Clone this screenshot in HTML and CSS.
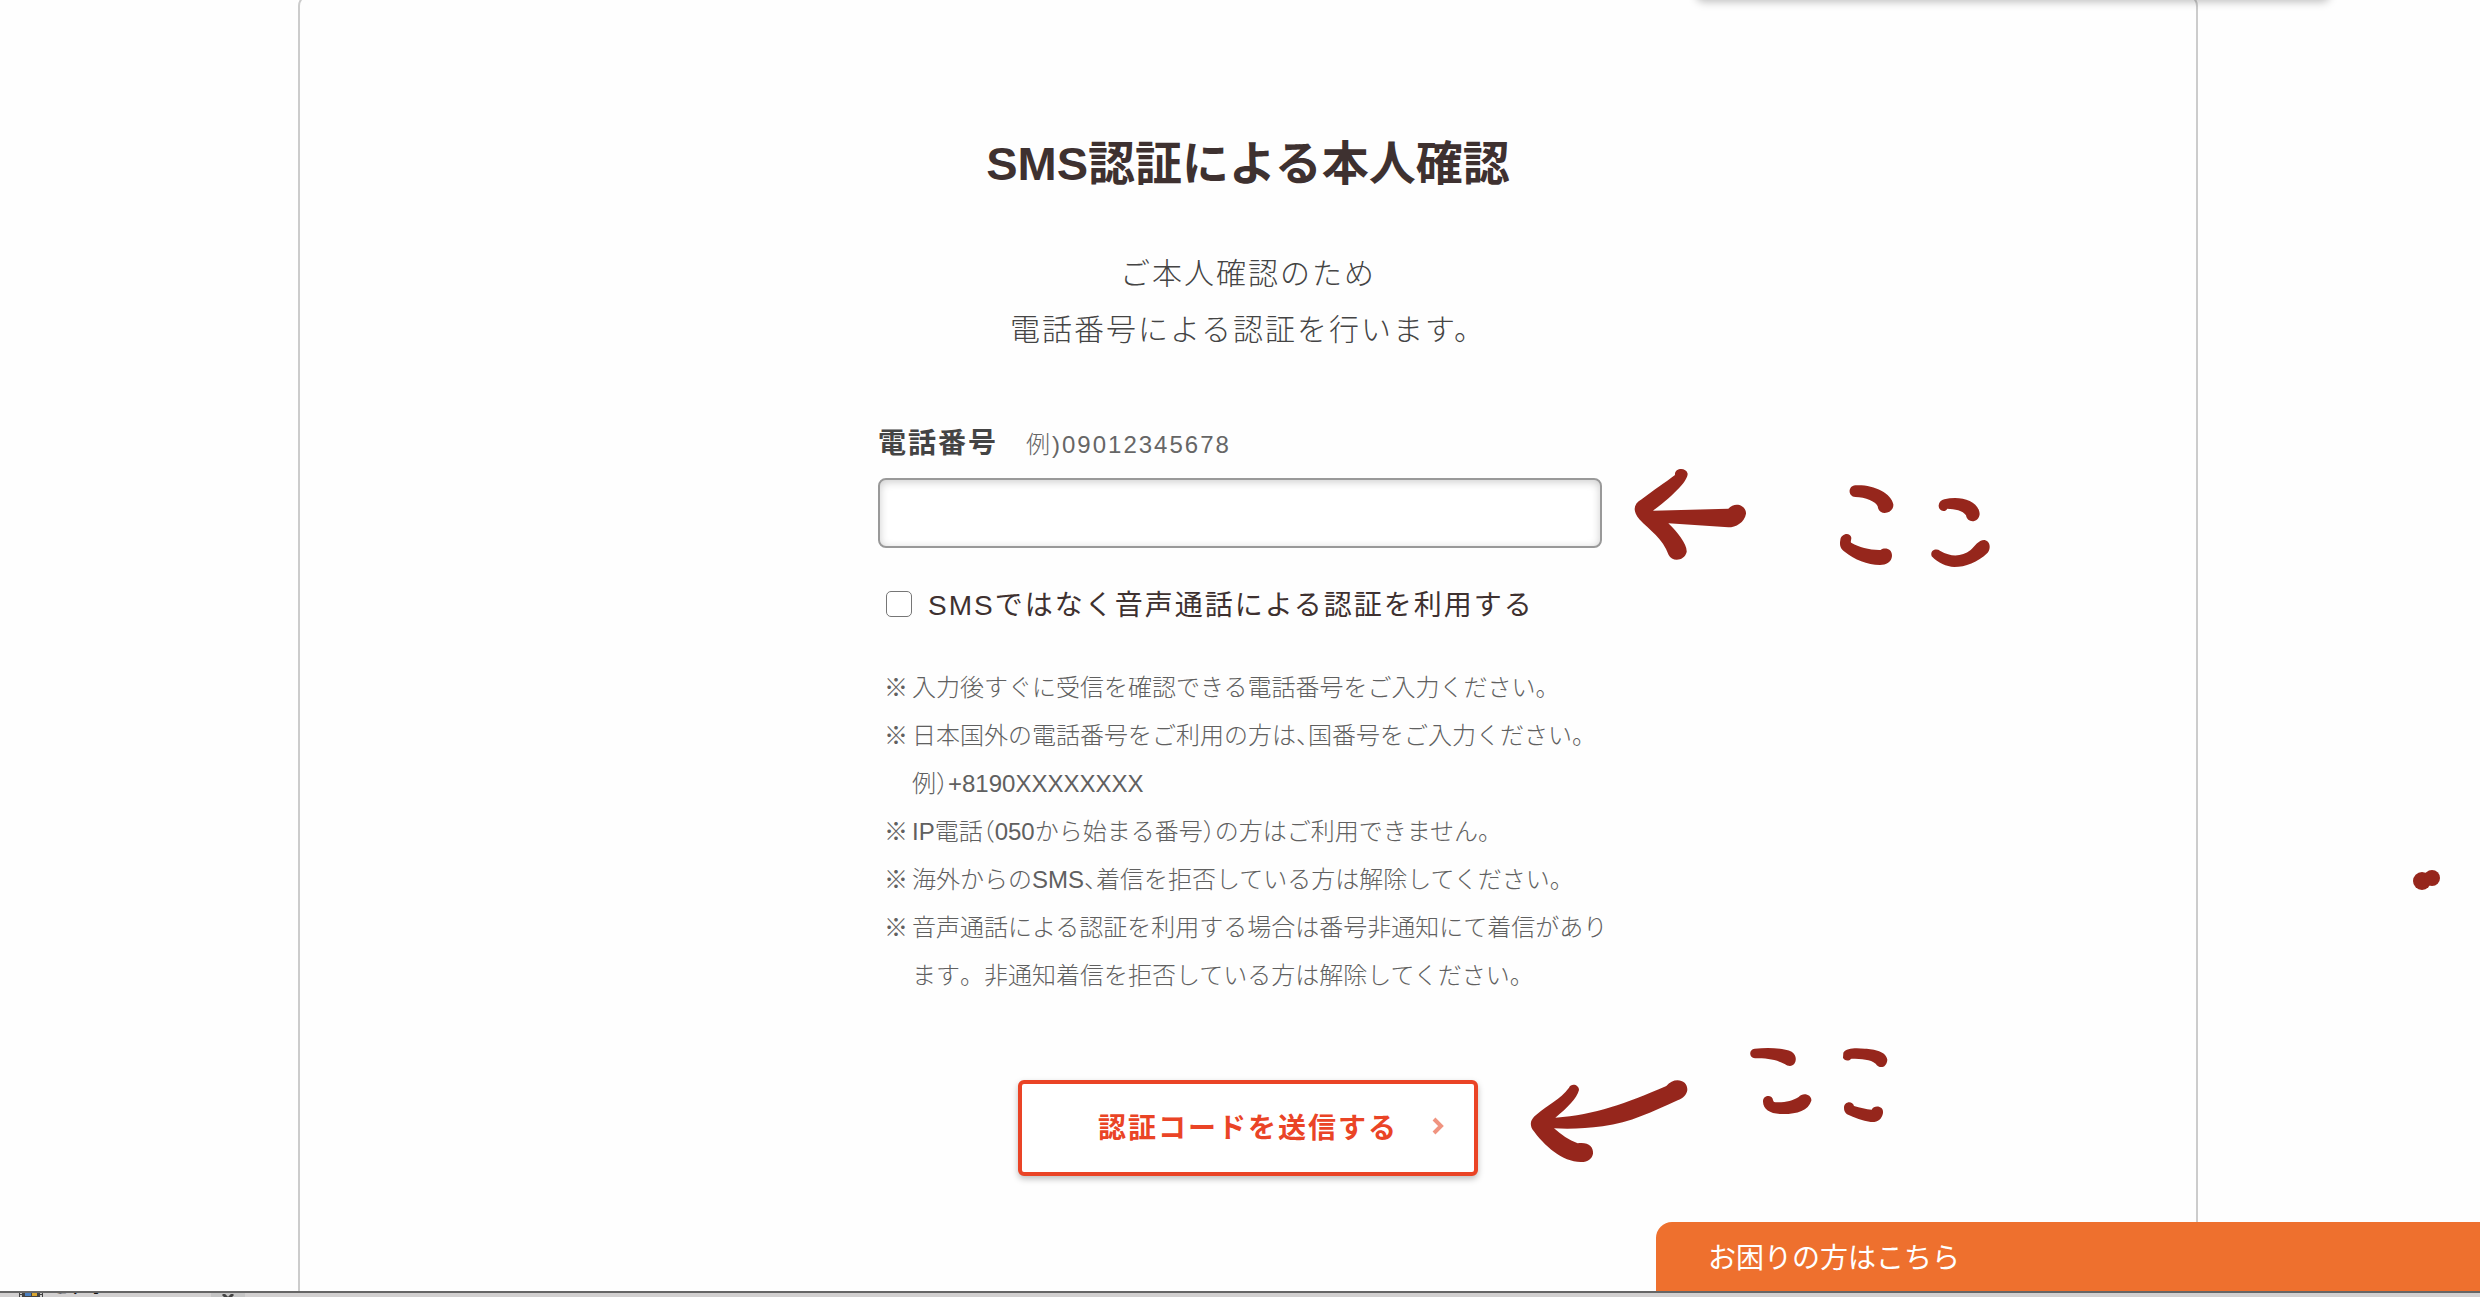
FILE: index.html
```html
<!DOCTYPE html>
<html lang="ja">
    <head>
        <meta charset="utf-8">
        <title>SMS認証による本人確認</title>
        <link rel="stylesheet" href="styles.css">
    </head>
    <body>
        <div class="page">
            <div class="popup-edge"></div>
            <main class="card">
                <h1 class="title">SMS認証による本人確認</h1>
                <p class="lead">ご本人確認のため<br>電話番号による認証を行います。</p>

                <form class="form">
                    <div class="field-head">
                        <label class="field-label" for="tel">電話番号</label>
                        <span class="field-hint" id="tel-hint">例)09012345678</span>
                    </div>
                    <div class="field">
                        <input class="field-input" id="tel" type="tel" aria-describedby="tel-hint">
                        <svg class="mark mark-field" viewBox="90 75 1110 330" role="img" aria-label="ここ">
                            <path d="M225 105C222 84 258 80 263 101C263 121 228 160 159 212L385 206C405 183 439 196 438 221C434 247 407 262 385 262L205 250C232 276 262 313 260 336C253 364 216 366 206 345C187 294 151 273 118 238C96 211 101 192 125 178C160 150 196 128 225 105Z"/>
                            <path d="M766 136C820 133 873 158 880 193C882 222 836 230 833 199C830 186 795 171 766 171C743 170 743 138 766 136Z"/>
                            <path d="M721 300C722 281 750 274 754 293C754 301 750 307 755 309C777 321 810 331 842 330C854 321 877 326 876 348C875 366 858 375 840 375C801 374 764 359 735 336C721 327 718 315 721 300Z"/>
                            <path d="M1033 178C1078 166 1136 180 1139 222C1136 251 1101 250 1098 226C1089 211 1064 207 1042 206C1035 220 1015 212 1016 196C1017 186 1024 180 1033 178Z"/>
                            <path d="M995 349C989 332 1007 323 1021 333C1055 353 1087 349 1111 331C1125 318 1136 299 1154 300C1170 303 1174 325 1163 338C1133 367 1096 381 1063 381C1039 380 1015 370 995 349Z"/>
                        </svg>
                    </div>

                    <div class="check">
                        <input class="check-box" id="voice" type="checkbox">
                        <label for="voice">SMSではなく音声通話による認証を利用する</label>
                    </div>

                    <ul class="notes">
                        <li>入力後すぐに受信を確認できる電話番号をご入力ください。</li>
                        <li>日本国外の電話番号をご利用の方は、国番号をご入力ください。<br>例）+8190XXXXXXXX</li>
                        <li>IP電話（050から始まる番号）の方はご利用できません。</li>
                        <li>海外からのSMS、着信を拒否している方は解除してください。</li>
                        <li>音声通話による認証を利用する場合は番号非通知にて着信があります<span class="full">。</span>非通知着信を拒否している方は解除してください。</li>
                    </ul>

                    <div class="submit">
                        <button class="submit-button" type="button">
                            <span>認証コードを送信する</span>
                            <svg class="submit-arrow" viewBox="0 0 12 18"><path d="M2 2L9 9L2 16"/></svg>
                        </button>
                        <svg class="mark mark-submit" viewBox="75 75 1110 375" role="img" aria-label="ここ">
                            <path d="M207 206C214 191 237 197 237 213C230 238 204 265 166 296C287 287 376 254 499 201C521 172 564 181 562 213C559 229 550 237 533 244C458 278 392 311 308 322C258 328 213 331 162 328C183 347 207 363 233 373C264 368 281 383 279 404C276 419 264 429 244 429C188 430 133 381 97 331C88 312 93 300 109 287C143 257 180 242 207 206Z"/>
                            <path d="M764 89C807 85 851 87 875 98C887 106 891 121 884 133C876 144 864 142 854 135C827 121 800 118 765 118C746 116 746 91 764 89Z"/>
                            <path d="M789 248C788 228 817 225 819 243C820 250 824 250 831 250C859 250 878 245 896 234C910 218 936 228 934 245C925 275 889 286 845 285C811 284 790 272 789 248Z"/>
                            <path d="M1030 101C1039 86 1069 86 1095 89C1122 90 1159 97 1162 122C1160 148 1137 150 1127 134C1111 119 1086 121 1054 119C1045 128 1033 125 1029 116Z"/>
                            <path d="M1032 267C1031 248 1057 243 1062 261C1080 266 1098 271 1115 272C1122 257 1152 260 1149 282C1146 301 1132 311 1112 309C1087 306 1064 297 1041 286C1035 281 1032 275 1032 267Z"/>
                        </svg>
                    </div>
                </form>
            </main>
            <svg class="mark mark-dot" viewBox="0 0 34 24"><circle cx="12" cy="14" r="9"/><circle cx="22" cy="11" r="8"/></svg>
            <a class="help" href="#help">お困りの方はこちら</a>
        </div>

        <footer class="strip">
            <svg class="strip-film" viewBox="0 0 24 6">
                <path fill="#444" d="M0 0h24v6H0z"/>
                <path fill="#ccc" d="M1 1h2v2H1zM1 4h2v2H1zM21 1h2v2h-2zM21 4h2v2h-2z"/>
                <path fill="#4a7fc0" d="M6 1h6v4H6z"/>
                <path fill="#d8a530" d="M13 2h5v3h-5z"/>
            </svg>
            <span class="strip-label">ビデオ</span>
            <span class="strip-toggle"><svg viewBox="0 0 12 6"><path d="M1 0L6 5L11 0"/></svg></span>
        </footer>
    </body>
</html>
```

FILE: styles.css
```css
* {
    box-sizing: border-box; }
body {
    margin: 0;
    height: 100vh;
    display: flex;
    flex-direction: column;
    overflow: hidden;
    background: #fefefe;
    color: #3e3130;
    font-family: "Liberation Sans", "Noto Sans CJK JP", sans-serif;
    font-size: 28px; }
.page {
    position: relative;
    flex: 1;
    min-height: 0;
    overflow: hidden; }

/* bottom shadow of the panel scrolled off above */
.popup-edge {
    position: absolute;
    top: -20px;
    right: 150px;
    width: 634px;
    height: 20px;
    border-radius: 8px;
    box-shadow: 0 2px 8px rgba(0, 0, 0, 0.25); }

.card {
    margin: -6px 282px 0 298px;
    height: 1400px;
    padding-top: 132px;
    border: 2px solid #ccc;
    border-radius: 12px; }
.title {
    margin: 0;
    font-size: 47px;
    line-height: 72px;
    text-align: center; }
.lead {
    margin: 46px 0 0;
    color: #444;
    font-size: 30px;
    font-weight: 300;
    line-height: 56px;
    letter-spacing: 2px;
    text-align: center; }

.form {
    width: 740px;
    margin: 66px auto 0; }
.field-head {
    display: flex;
    align-items: baseline;
    gap: 28px;
    line-height: 40px; }
.field-label {
    color: #444;
    font-weight: bold;
    letter-spacing: 2px; }
.field-hint {
    color: #666;
    font-size: 24px;
    font-weight: 300;
    letter-spacing: 2px; }
.field {
    position: relative;
    margin-top: 13px; }
.field-input {
    display: block;
    width: 724px;
    height: 70px;
    padding: 0 16px;
    border: 2px solid #999;
    border-radius: 8px;
    background: #fff;
    box-shadow: inset 0 2px 8px rgba(0, 0, 0, 0.2);
    font: inherit; }

.check {
    display: flex;
    align-items: center;
    gap: 16px;
    margin-top: 38px;
    padding-left: 8px;
    line-height: 40px;
    letter-spacing: 2px; }
.check-box {
    appearance: none;
    width: 26px;
    height: 26px;
    margin: 0 0 4px;
    border: 1px solid #767676;
    border-radius: 5px;
    background: #fff; }

.notes {
    margin: 38px 0 0;
    padding-left: 6px;
    list-style: none;
    color: #606060;
    font-size: 24px;
    font-weight: 300;
    line-height: 48px;
    font-feature-settings: "halt"; }
.notes li {
    padding-left: 28px;
    text-indent: -28px; }
.notes li::before {
    content: "※";
    display: inline-block;
    width: 28px;
    text-indent: 0; }
.notes .full {
    font-feature-settings: normal; }

.submit {
    position: relative;
    width: 460px;
    margin: 80px auto 0; }
.submit-button {
    display: flex;
    align-items: center;
    justify-content: flex-end;
    gap: 34px;
    width: 100%;
    height: 96px;
    padding: 0 30px 4px;
    border: 4px solid #ea4426;
    border-radius: 6px;
    background: #fff;
    box-shadow: 0 3px 6px rgba(0, 0, 0, 0.25);
    color: #ea4426;
    font: inherit;
    font-weight: bold;
    letter-spacing: 2px; }
.submit-arrow {
    width: 12px;
    height: 18px;
    fill: none;
    stroke: #f09480;
    stroke-width: 4; }

/* handwritten marks */
.mark {
    position: absolute;
    fill: #96261c; }
.mark-field {
    width: 370px;
    height: 110px;
    left: 752px;
    top: -13px; }
.mark-submit {
    width: 370px;
    height: 125px;
    left: 507px;
    top: -36px; }
.mark-dot {
    width: 34px;
    height: 24px;
    right: 36px;
    top: 867px; }

.help {
    position: absolute;
    right: 0;
    bottom: 0;
    width: 824px;
    padding: 16px 52px 12px;
    border-top-left-radius: 16px;
    background: #ee702e;
    color: #fff;
    line-height: 41px;
    text-decoration: none; }

.strip {
    display: flex;
    align-items: flex-end;
    height: 6px;
    padding-left: 19px;
    overflow: hidden;
    border-top: 2px solid #666;
    background: #d2d0d0; }
.strip-film {
    width: 24px;
    height: 6px; }
.strip-label {
    width: 158px;
    margin-left: 10px;
    color: #111;
    font-size: 17px;
    line-height: 18px; }
.strip-toggle {
    width: 34px;
    height: 6px;
    background: #c4c4c4;
    text-align: center;
    line-height: 0; }
.strip-toggle svg {
    width: 12px;
    height: 6px;
    fill: none;
    stroke: #444;
    stroke-width: 3; }
```
